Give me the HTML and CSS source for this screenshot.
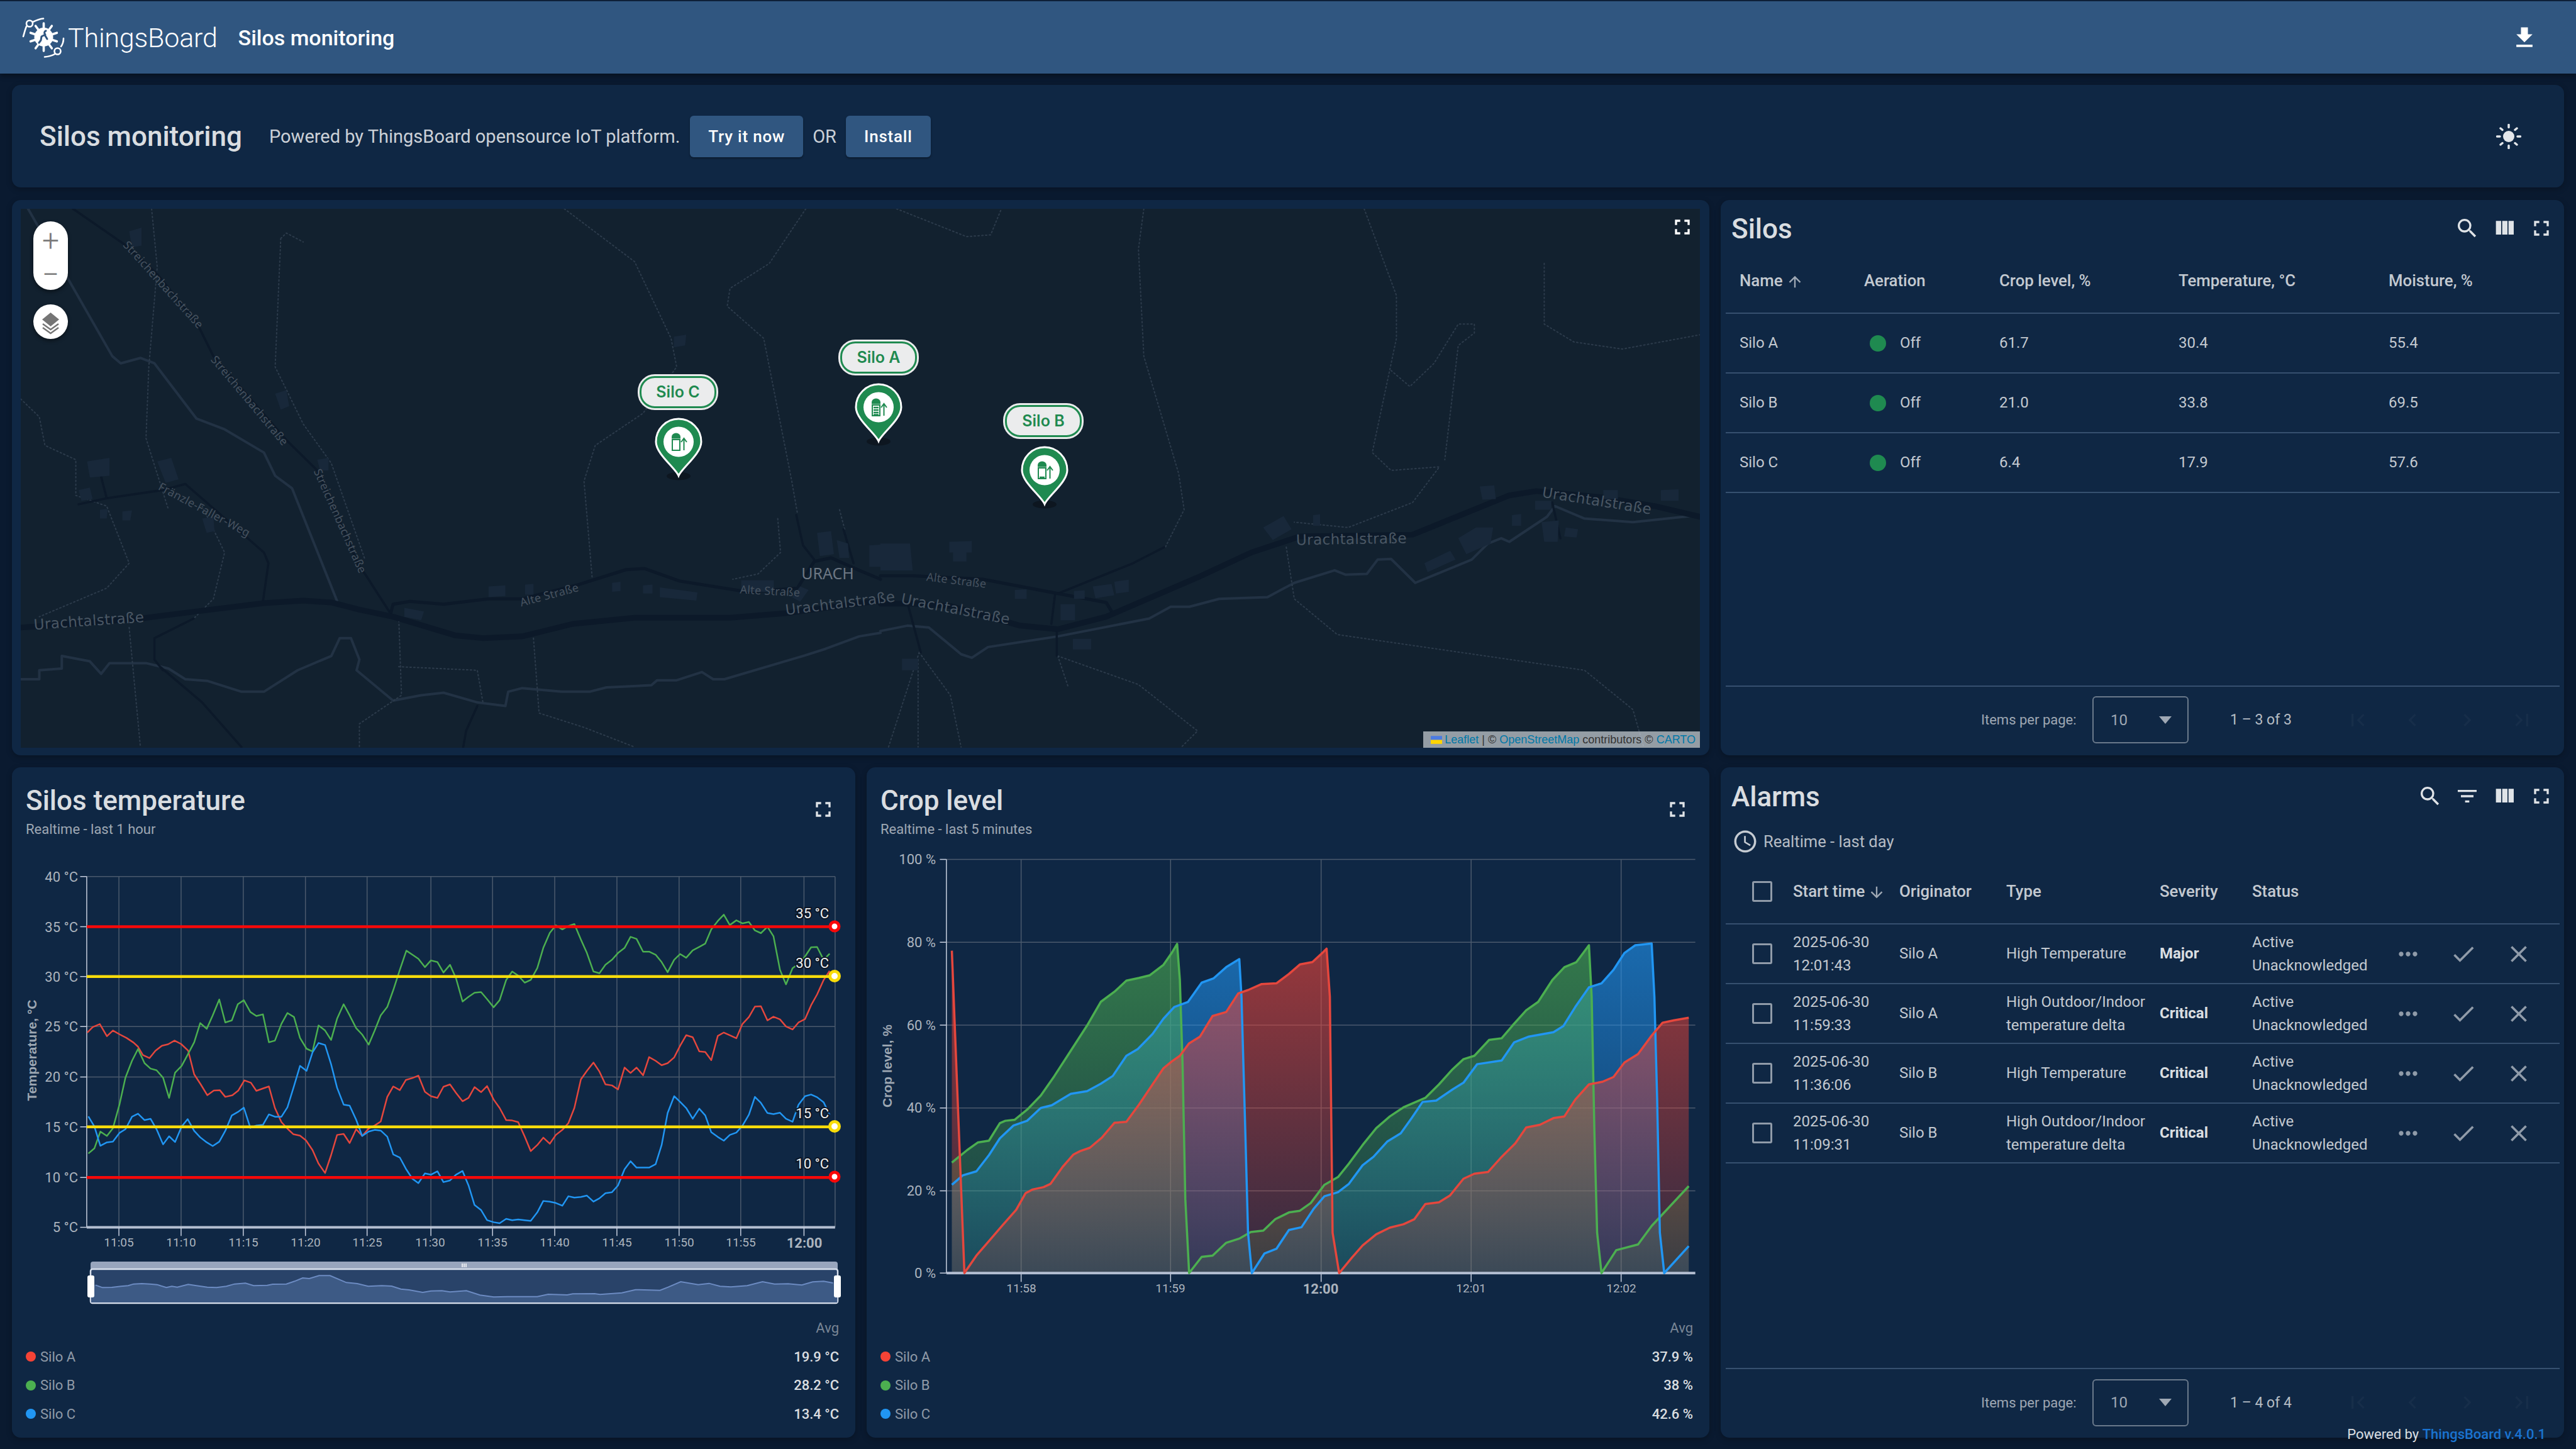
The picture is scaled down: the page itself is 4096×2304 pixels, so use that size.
FILE: index.html
```html
<!DOCTYPE html>
<html lang="en">
<head>
<meta charset="utf-8">
<title>Silos monitoring</title>
<link rel="stylesheet" href="styles.css">
</head>
<body>
<svg class="defs" width="0" height="0" aria-hidden="true">
  <defs>
    <symbol id="i-full" viewBox="0 0 24 24"><path d="M7 14H5v5h5v-2H7v-3zm-2-4h2V7h3V5H5v5zm12 7h-3v2h5v-5h-2v3zM14 5v2h3v3h2V5h-5z"/></symbol>
    <symbol id="i-search" viewBox="0 0 24 24"><path d="M15.5 14h-.79l-.28-.27A6.471 6.471 0 0 0 16 9.5 6.5 6.5 0 1 0 9.5 16c1.61 0 3.09-.59 4.23-1.57l.27.28v.79l5 4.99L20.49 19l-4.99-5zm-6 0C7.01 14 5 11.99 5 9.5S7.01 5 9.5 5 14 7.01 14 9.5 11.99 14 9.5 14z"/></symbol>
    <symbol id="i-cols" viewBox="0 0 24 24"><path d="M10 18h5V5h-5v13zm-6 0h5V5H4v13zM16 5v13h5V5h-5z"/></symbol>
    <symbol id="i-filter" viewBox="0 0 24 24"><path d="M10 18h4v-2h-4v2zM3 6v2h18V6H3zm3 7h12v-2H6v2z"/></symbol>
    <symbol id="i-up" viewBox="0 0 24 24"><path d="M4 12l1.41 1.41L11 7.83V20h2V7.83l5.58 5.59L20 12l-8-8-8 8z"/></symbol>
    <symbol id="i-down" viewBox="0 0 24 24"><path d="M20 12l-1.41-1.41L13 16.17V4h-2v12.17l-5.58-5.59L4 12l8 8 8-8z"/></symbol>
    <symbol id="i-more" viewBox="0 0 24 24"><path d="M6 10c-1.1 0-2 .9-2 2s.9 2 2 2 2-.9 2-2-.9-2-2-2zm12 0c-1.1 0-2 .9-2 2s.9 2 2 2 2-.9 2-2-.9-2-2-2zm-6 0c-1.1 0-2 .9-2 2s.9 2 2 2 2-.9 2-2-.9-2-2-2z"/></symbol>
    <symbol id="i-check" viewBox="0 0 24 24"><path d="M9 16.17L4.83 12l-1.42 1.41L9 19 21 7l-1.41-1.41z"/></symbol>
    <symbol id="i-close" viewBox="0 0 24 24"><path d="M19 6.41L17.59 5 12 10.59 6.41 5 5 6.41 10.59 12 5 17.59 6.41 19 12 13.41 17.59 19 19 17.59 13.41 12z"/></symbol>
    <symbol id="i-clock" viewBox="0 0 24 24"><path d="M11.99 2C6.47 2 2 6.48 2 12s4.47 10 9.99 10C17.52 22 22 17.52 22 12S17.52 2 11.99 2zM12 20c-4.42 0-8-3.58-8-8s3.58-8 8-8 8 3.58 8 8-3.58 8-8 8zm.5-13H11v6l5.25 3.15.75-1.23-4.5-2.67z"/></symbol>
    <symbol id="i-first" viewBox="0 0 24 24"><path d="M18.41 16.59L13.82 12l4.59-4.59L17 6l-6 6 6 6zM6 6h2v12H6z"/></symbol>
    <symbol id="i-prev" viewBox="0 0 24 24"><path d="M15.41 7.41L14 6l-6 6 6 6 1.41-1.41L10.83 12z"/></symbol>
    <symbol id="i-next" viewBox="0 0 24 24"><path d="M10 6L8.59 7.41 13.17 12l-4.58 4.59L10 18l6-6z"/></symbol>
    <symbol id="i-last" viewBox="0 0 24 24"><path d="M5.59 7.41L10.18 12l-4.59 4.59L7 18l6-6-6-6zM16 6h2v12h-2z"/></symbol>
    <symbol id="pin-shape" viewBox="0 0 76 100">
      <ellipse class="pin-shadow" cx="38" cy="93" rx="19" ry="6.5"/>
      <path class="pin-body" d="M38 92.5C33 80 2 58 2 38.500A36 36.500 0 0 1 74 38.500C74 58 43 80 38 92.500Z"/>
      <circle class="pin-hole" cx="38" cy="38.500" r="24"/>
      <path class="pin-solid" d="M27 33.500v-3a7 6 0 0 1 14 0v3z"/>
      <rect class="pin-line" x="28" y="35" width="12" height="17"/>
      <path class="pin-line" d="M46.500 52V34M42 39l4.500-6 4.500 6"/>
    </symbol>
    <linearGradient id="g-red" gradientUnits="userSpaceOnUse" x1="0" y1="292" x2="0" y2="1520"><stop offset="0" stop-color="#f44336" stop-opacity=".72"/><stop offset="1" stop-color="#f44336" stop-opacity=".15"/></linearGradient>
    <linearGradient id="g-green" gradientUnits="userSpaceOnUse" x1="0" y1="292" x2="0" y2="1520"><stop offset="0" stop-color="#4caf50" stop-opacity=".72"/><stop offset="1" stop-color="#4caf50" stop-opacity=".15"/></linearGradient>
    <linearGradient id="g-blue" gradientUnits="userSpaceOnUse" x1="0" y1="292" x2="0" y2="1520"><stop offset="0" stop-color="#2196f3" stop-opacity=".72"/><stop offset="1" stop-color="#2196f3" stop-opacity=".15"/></linearGradient>
  </defs>
</svg>

<header class="topbar">
  <svg class="logo" viewBox="0 0 100 100" aria-hidden="true">
    <g class="logo-lines">
      <path d="M15 47C17 40 18 36 20 31"/><circle cx="25" cy="26.500" r="5"/><path d="M30 24C36 21 41 19 47 18.500"/>
      <circle cx="69.500" cy="70.500" r="5"/><path d="M65 75C60 78 55 79 49 79.500"/><path d="M75 63C78 59 79 55 79 50"/>
    </g>
    <g class="logo-gear">
      <circle cx="47.500" cy="48" r="15"/>
      <path d="M26.600 41.200L68.400 54.800M34.600 30.200L60.400 65.800M47.500 26V70M60.400 30.200L34.600 65.800M68.400 41.200L26.600 54.800"/>
    </g>
    <path class="logo-fig" d="M51 38c-3 1-3 4-1 6l-6 3-1 6-3 4M50 46l3 5"/>
  </svg>
  <span class="brand">ThingsBoard</span>
  <span class="top-title">Silos monitoring</span>
  <svg class="top-icon" viewBox="0 0 24 24" aria-hidden="true"><path d="M19 9h-4V3H9v6H5l7 7 7-7zM5 18v2h14v-2H5z"/></svg>
</header>

<main class="dash">
  <section class="card hero">
    <h1 class="hero-title">Silos monitoring</h1>
    <span class="hero-text">Powered by ThingsBoard opensource IoT platform.</span>
    <button class="btn">Try it now</button>
    <span class="hero-or">OR</span>
    <button class="btn">Install</button>
    <svg class="sun" viewBox="0 0 40 40" aria-hidden="true">
      <circle cx="20" cy="20" r="9"/>
      <path d="M20 1.500v4M20 34.500v4M1.500 20h4.500M34 20h4.500M7 7l3 2.500M33 33l-3-2.500M33 7l-3 2.500M7 33l3-2.500"/>
    </svg>
  </section>

  <section class="card map-card">
    <div class="map">
      <svg class="map-svg" viewBox="33 331 2670 857" aria-hidden="true">
        <g transform="translate(0 310) scale(.8929 .5675)">
          <g class="m-stream">
            <path d="M50 37L120 230L200 450L215 470L250 455L275 470L350 625L400 655L470 720L490 785L520 820L600 1135"/>
            <path d="M37 1355L70 1355L70 1330L110 1325L110 1290L160 1305L180 1340L195 1310L260 1310L300 1325L330 1355L370 1360L430 1390L470 1390L530 1330L590 1290L605 1240L625 1240L640 1300L635 1330L700 1415L750 1400L790 1393L850 1420L900 1430L905 1390L930 1380L1000 1390L1050 1390L1080 1378L1160 1372L1170 1358L1205 1358L1250 1335L1270 1355L1290 1355L1430 1290L1470 1270L1530 1235L1568 1225"/>
          </g>
          <g class="m-dots">
            <path d="M270 37L280 200L265 480L260 680L300 880"/>
            <path d="M500 120L510 105L540 130M500 120L490 480L540 640L590 750L650 1020"/>
            <path d="M1005 37L1130 185L1195 400L1205 480L1145 610L1060 700L1040 800L1055 1080"/>
            <path d="M1435 37L1370 190L1300 260L1295 310L1360 400L1410 800L1420 890"/>
            <path d="M37 570L70 620L80 700L135 740L135 840L190 870L230 1030L190 1100L70 1180"/>
            <path d="M360 870L400 1000L380 1130L345 1185"/>
            <path d="M1385 905L1390 1000L1350 1060L1305 1075"/>
            <path d="M230 1210L250 1545M710 1180L715 1400L640 1480L640 1545M710 1320L850 1330L860 1420M950 1240L960 1450L1040 1490L1130 1545M1495 880L1505 940"/>
          </g>
          <g class="m-thin">
            <path d="M285 1320L360 1420L430 1545M345 1185L275 1240L275 1300L290 1330M850 1430L830 1500L825 1545M1418 895L1430 980L1450 1020M1502 935L1520 1030M178 775L190 848"/>
            <path d="M140 865L190 848L290 825L330 808L430 945L470 1000L478 1030L468 1140"/>
            <path d="M130 37L220 135L280 220L350 355L380 450L510 685L565 770L640 1040L650 1060L695 1170"/>
          </g>
          <g class="m-road2"><path d="M695 1175L700 1145L730 1137L790 1145L870 1130L930 1130L1030 1090L1115 1048L1148 1045L1210 1080L1330 1110L1420 1100L1450 1025L1480 1015L1530 1050L1568 1075"/></g>
          <g class="m-road"><path d="M37 1210L60 1208L250 1185L350 1165L470 1142L540 1135L590 1140L640 1160L700 1180L810 1232L860 1240L930 1235L1020 1200L1130 1183L1300 1183L1400 1170L1568 1135"/></g>
          <g class="m-bld">
            <path d="M155 745L195 735L195 785L160 790ZM280 745L305 735L318 795L295 805ZM140 825L160 818L165 850L145 855ZM178 880L192 878L190 905L178 905ZM218 885L235 882L232 910L218 910ZM360 905L380 900L382 940L368 945ZM490 555L510 545L515 590L500 600ZM230 100L252 90L252 140L235 145ZM565 740L585 735L585 770L570 770ZM870 1095L900 1092L900 1122L870 1125ZM935 1090L950 1088L950 1118L935 1118ZM1090 1085L1105 1082L1105 1108L1090 1110ZM1175 1098L1242 1112L1240 1135L1175 1125ZM1145 1092L1162 1090L1162 1115L1145 1115ZM720 1155L755 1165L750 1190L720 1180ZM1320 1078L1378 1078L1378 1110L1320 1110ZM1425 1095L1440 1105L1425 1138L1410 1125ZM1455 945L1480 940L1485 1005L1460 1010ZM1490 965L1510 975L1512 1015L1495 1015ZM1548 980L1568 978L1568 1040L1548 1040ZM1200 395L1222 390L1220 420L1200 425Z"/>
          </g>
        </g>
        <g transform="translate(1400 310) scale(.8546 .5675)">
          <g class="m-stream">
            <path d="M0 1220L50 1205L90 1210L150 1285L170 1295L200 1265L330 1235L500 1185L540 1152L575 1152L630 1130L720 1125L770 1085L845 1050L865 1062L905 1060L925 1020L950 1018L995 1085L1100 1020L1130 975L1155 960L1170 970L1240 900L1255 870L1310 905L1400 915L1525 895"/>
          </g>
          <g class="m-dots">
            <path d="M30 37L160 115L205 110L225 37M490 37L480 150L490 450L555 780L565 880L530 985"/>
            <path d="M900 37L960 280L960 400L915 720L950 770L1040 760L990 860L870 930L770 915"/>
            <path d="M1235 190L1235 360L1290 410L1380 430L1525 390"/>
            <path d="M950 490L985 535L1030 470L1075 360L1105 360L1105 385L1075 420L1050 740"/>
            <path d="M755 985L770 1130L850 1230L1310 1330L1400 1440L1420 1545"/>
            <path d="M330 1290L480 1370L590 1500L560 1545M330 1290L350 1380M72 1280L130 1400L150 1545M72 1280L15 1545M70 1300L70 1545"/>
          </g>
          <g class="m-thin">
            <path d="M325 1115L318 1200M328 1215L328 1290M50 1140L75 1280M1250 860L1265 960"/>
            <path d="M330 1115L470 1030L528 985"/>
          </g>
          <g class="m-road2"><path d="M0 1065L60 1065L190 1075L330 1115L420 1140L430 1165"/></g>
          <g class="m-road"><path d="M0 1143L60 1143L130 1150L260 1205L330 1215L420 1180L590 1070L690 1000L780 955L990 950L1170 840L1220 828L1340 845L1440 870L1525 900"/></g>
          <g class="m-bld">
            <path d="M128 970L170 968L170 1000L128 1000ZM135 1000L160 1000L160 1025L135 1025ZM0 975L55 975L60 1050L0 1050ZM395 1095L430 1088L435 1120L400 1128ZM435 1082L462 1076L462 1110L438 1115ZM360 1108L380 1106L380 1130L360 1130ZM250 1105L272 1103L272 1130L250 1130ZM335 1145L362 1145L362 1190L335 1190ZM358 1242L392 1242L392 1272L358 1272ZM40 1298L70 1298L70 1330L40 1330ZM712 930L750 898L765 935L730 965ZM805 895L818 893L818 925L805 925ZM1115 815L1142 812L1145 850L1120 852ZM1012 1030L1060 995L1070 1020L1018 1055ZM1075 960L1108 930L1140 930L1135 975L1090 1005ZM1175 895L1192 892L1192 925L1175 925ZM1230 915L1262 910L1260 970L1235 970ZM1275 930L1298 935L1295 958L1272 955ZM1218 855L1248 855L1248 880L1218 880ZM1452 825L1485 823L1485 855L1452 855ZM1345 825L1372 825L1372 850L1345 850Z"/>
          </g>
        </g>
        <g class="m-label">
          <text transform="translate(142 994) rotate(-4)">Urachtalstraße</text>
          <text transform="translate(1337 966) rotate(-7)">Urachtalstraße</text>
          <text transform="translate(1518 975) rotate(11)">Urachtalstraße</text>
          <text transform="translate(2149 864) rotate(-1)">Urachtalstraße</text>
          <text transform="translate(2538 803) rotate(9)">Urachtalstraße</text>
        </g>
        <g class="m-label m-small">
          <text transform="translate(875 951) rotate(-15)">Alte Straße</text>
          <text transform="translate(1224 945) rotate(3)">Alte Straße</text>
          <text transform="translate(1520 928) rotate(7)">Alte Straße</text>
          <text transform="translate(255 456) rotate(48)">Streichenbachstraße</text>
          <text transform="translate(392 640) rotate(50)">Streichenbachstraße</text>
          <text transform="translate(535 830) rotate(66)">Streichenbachstraße</text>
          <text transform="translate(322 815) rotate(28)">Fränzle-Faller-Weg</text>
        </g>
        <text class="m-town" x="1316" y="920">URACH</text>
      </svg>
      <div class="zoomctl"><span class="zoom-sign">+</span><span class="zoom-sign">−</span></div>
      <div class="layerctl">
        <svg viewBox="0 0 55 55" aria-hidden="true"><path class="layer-top" d="M27.500 13L41 24L27.500 35L14 24Z"/><path class="layer-low" d="M15 31L27.500 40L40 31M15 37L27.500 46L40 37"/></svg>
      </div>
      <svg class="map-full" aria-hidden="true"><use href="#i-full"/></svg>

      <div class="mlabel ml-a">Silo A</div>
      <div class="mlabel ml-c">Silo C</div>
      <div class="mlabel ml-b">Silo B</div>
      <svg class="pin pin-a" viewBox="0 0 76 100" aria-hidden="true"><use href="#pin-shape"/><path class="pin-bars" d="M30 39h8M30 43h8M30 47h8M30 50.500h8"/></svg>
      <svg class="pin pin-c" viewBox="0 0 76 100" aria-hidden="true"><use href="#pin-shape"/></svg>
      <svg class="pin pin-b" viewBox="0 0 76 100" aria-hidden="true"><use href="#pin-shape"/><path class="pin-bars" d="M30 50h8"/></svg>

      <div class="attrib"><svg class="flag" viewBox="0 0 20 14" aria-hidden="true"><rect width="20" height="7" fill="#4C7BE1"/><rect y="7" width="20" height="7" fill="#FFD500"/></svg><a>Leaflet</a> | © <a>OpenStreetMap</a> contributors © <a>CARTO</a></div>
    </div>
  </section>

  <section class="card table-card">
    <div class="tb-head silos-head">
      <h2 class="tb-title">Silos</h2>
      <div class="tb-tools">
        <svg class="ic"><use href="#i-search"/></svg>
        <svg class="ic"><use href="#i-cols"/></svg>
        <svg class="ic"><use href="#i-full"/></svg>
      </div>
    </div>
    <div class="tb-body">
      <table class="tbl silos">
        <thead><tr>
          <th class="s1">Name<svg class="sort"><use href="#i-up"/></svg></th>
          <th class="s2">Aeration</th><th class="s3">Crop level, %</th><th class="s4">Temperature, °C</th><th class="s5">Moisture, %</th>
        </tr></thead>
        <tbody>
          <tr><td>Silo A</td><td><span class="state"><i class="dot"></i>Off</span></td><td>61.7</td><td>30.4</td><td>55.4</td></tr>
          <tr><td>Silo B</td><td><span class="state"><i class="dot"></i>Off</span></td><td>21.0</td><td>33.8</td><td>69.5</td></tr>
          <tr><td>Silo C</td><td><span class="state"><i class="dot"></i>Off</span></td><td>6.4</td><td>17.9</td><td>57.6</td></tr>
        </tbody>
      </table>
    </div>
    <div class="pager">
      <span class="pg-label">Items per page:</span>
      <div class="pg-select"><span>10</span><i class="pg-caret"></i></div>
      <span class="pg-range">1 – 3 of 3</span>
      <div class="pg-nav"><svg class="ic"><use href="#i-first"/></svg><svg class="ic"><use href="#i-prev"/></svg><svg class="ic"><use href="#i-next"/></svg><svg class="ic"><use href="#i-last"/></svg></div>
    </div>
  </section>

  <section class="card chart-card">
    <div class="ch-head">
      <div><h2 class="ch-title">Silos temperature</h2><p class="ch-sub">Realtime - last 1 hour</p></div>
      <svg class="ic ch-full"><use href="#i-full"/></svg>
    </div>
    <svg class="ch-svg" viewBox="0 1340 1341 749" aria-hidden="true">
      <g transform="translate(-19 0)">
        <g transform="translate(0 1210) scale(.8673 .5357)">
          <path class="grid" d="M159 343H1531M159 788H1531M159 938H1531"/>
          <path class="grid" d="M218 343V1384M332 343V1384M446 343V1384M560 343V1384M673 343V1384M790 343V1384M903 343V1384M1017 343V1384M1131 343V1384M1245 343V1384M1358 343V1384M1474 343V1384M1531 343V1384"/>
          <path class="axis-y" d="M159 343V1384M147 343H159M147 492H159M147 640H159M147 788H159M147 938H159M147 1086H159M147 1236H159M147 1384H159"/>
          <path class="axis-x" d="M159 1384H1531"/>
          <path class="axis-y" d="M218 1384V1410M332 1384V1410M446 1384V1410M560 1384V1410M673 1384V1410M790 1384V1410M903 1384V1410M1017 1384V1410M1131 1384V1410M1245 1384V1410M1358 1384V1410M1474 1384V1410"/>
          <polyline class="ln ln-red" points="160,806 170,790 183,781 196,817 207,800 220,812 232,822 245,836 253,848 262,873 274,882 285,860 297,845 308,841 320,830 332,840 345,860 356,930 368,960 380,992 392,978 403,977 413,997 426,992 437,978 448,948 460,955 470,979 482,972 493,966 504,1030 516,1072 528,1093 538,1108 550,1112 561,1126 573,1155 584,1195 596,1223 607,1170 618,1110 630,1107 641,1134 653,1093 664,1113 676,1091 687,1082 698,1070 710,997 721,966 733,977 744,947 756,941 767,934 779,982 790,995 802,1000 813,967 825,960 836,985 848,1010 859,1000 870,968 882,983 893,965 905,1005 916,1030 928,1066 939,1067 950,1072 962,1115 973,1158 985,1140 996,1118 1008,1136 1019,1110 1031,1095 1042,1075 1053,1030 1065,945 1076,920 1088,895 1099,922 1110,960 1122,963 1133,975 1145,910 1156,926 1167,910 1179,933 1190,879 1202,890 1213,903 1224,897 1236,880 1247,845 1258,814 1270,820 1282,862 1293,864 1304,888 1316,816 1327,806 1338,814 1350,823 1361,781 1373,760 1384,729 1395,728 1407,770 1418,759 1430,767 1441,788 1453,797 1464,776 1476,766 1487,725 1498,693 1510,650 1521,623"/>
          <polyline class="ln ln-green" points="162,1165 173,1150 184,1100 196,1113 207,1090 219,1020 230,940 242,890 253,855 265,897 276,913 287,918 299,940 310,1000 321,925 333,905 344,872 356,835 367,778 379,795 390,755 402,708 413,776 425,770 436,722 447,710 459,745 470,757 482,752 493,835 504,830 516,780 527,748 539,760 550,822 562,854 573,862 584,785 596,800 607,828 618,765 630,722 641,755 653,793 664,812 676,842 687,800 698,755 710,730 721,680 733,620 745,563 756,575 767,587 779,612 790,592 802,597 813,628 825,605 836,645 848,714 859,700 870,688 882,686 893,707 905,731 916,710 928,650 939,625 950,637 962,658 973,650 985,615 996,555 1008,510 1019,488 1031,500 1042,490 1053,484 1065,530 1076,570 1088,625 1099,630 1110,605 1122,590 1133,570 1145,555 1156,522 1167,528 1179,566 1190,566 1202,575 1213,597 1224,627 1236,590 1247,573 1258,584 1270,562 1282,552 1293,542 1304,500 1316,475 1327,456 1338,487 1350,473 1361,482 1373,478 1384,503 1395,511 1407,492 1418,520 1430,620 1441,663 1453,615 1464,602 1476,580 1487,553 1498,552 1510,590 1521,572"/>
          <polyline class="ln ln-blue" points="162,1055 173,1085 184,1142 196,1132 207,1130 219,1104 230,1093 242,1056 253,1047 265,1066 276,1062 287,1093 299,1138 310,1114 321,1131 333,1085 344,1063 356,1098 367,1117 379,1132 390,1143 402,1130 413,1098 425,1052 436,1042 447,1029 459,1089 470,1082 482,1080 493,1049 504,1056 516,1056 527,1028 539,965 550,905 562,920 573,865 584,837 596,843 607,900 618,970 630,1020 641,1023 653,1065 664,1113 676,1100 687,1095 698,1097 710,1115 721,1168 733,1177 744,1210 756,1240 767,1253 779,1224 790,1228 802,1218 813,1250 825,1245 836,1228 848,1217 859,1260 870,1318 882,1333 893,1363 905,1369 916,1372 928,1359 939,1363 950,1361 962,1363 973,1365 985,1340 996,1306 1008,1308 1019,1312 1031,1320 1042,1292 1053,1296 1065,1294 1076,1290 1088,1308 1099,1298 1110,1283 1122,1280 1133,1260 1145,1212 1156,1188 1167,1207 1179,1207 1190,1207 1202,1197 1213,1140 1224,1045 1236,995 1247,1012 1258,1030 1270,1062 1282,1032 1293,1052 1304,1102 1316,1116 1327,1127 1338,1110 1350,1103 1361,1083 1373,1050 1384,997 1395,1015 1407,1045 1418,1048 1430,1044 1441,1062 1453,1071 1464,1020 1476,995 1487,990 1498,998 1510,1013 1521,1050"/>
          <path class="th th-red" d="M159 492H1531M159 1236H1531"/>
          <path class="th th-yel" d="M159 640H1531M159 1086H1531"/>
        </g>
        <circle class="thd thd-red" cx="1327" cy="1473" r="7"/>
        <circle class="thd thd-yel" cx="1327" cy="1552" r="7.500"/>
        <circle class="thd thd-yel" cx="1327" cy="1791" r="7.500"/>
        <circle class="thd thd-red" cx="1327" cy="1871" r="7"/>
        <g class="th-lab">
          <text x="1318" y="1460">35 °C</text><text x="1318" y="1539">30 °C</text><text x="1318" y="1778">15 °C</text><text x="1318" y="1858">10 °C</text>
        </g>
        <g class="yl">
          <text x="124" y="1402">40 °C</text><text x="124" y="1482">35 °C</text><text x="124" y="1561">30 °C</text><text x="124" y="1640">25 °C</text><text x="124" y="1720">20 °C</text><text x="124" y="1800">15 °C</text><text x="124" y="1880">10 °C</text><text x="124" y="1959">5 °C</text>
        </g>
        <g class="xl">
          <text x="189" y="1982">11:05</text><text x="288" y="1982">11:10</text><text x="387" y="1982">11:15</text><text x="486" y="1982">11:20</text><text x="584" y="1982">11:25</text><text x="684" y="1982">11:30</text><text x="783" y="1982">11:35</text><text x="882" y="1982">11:40</text><text x="981" y="1982">11:45</text><text x="1080" y="1982">11:50</text><text x="1178" y="1982">11:55</text><text class="xl-b" x="1279" y="1984">12:00</text>
        </g>
        <text class="ax-t" transform="translate(58 1670) rotate(-90)">Temperature, °C</text>
        <g>
          <path class="br-top" d="M144 2010a4 4 0 0 1 4-4H1328a4 4 0 0 1 4 4V2018H144Z"/>
          <path class="br-grip" d="M735 2009v6M738 2009v6M741 2009v6"/>
          <rect class="br-body" x="144" y="2018" width="1188" height="54" rx="3"/>
          <g transform="translate(0 1900) scale(.8673 .3333)">
            <polygon class="br-area" points="175,430 188,442 205,441 222,436 235,433 245,425 260,423 275,425 288,428 305,442 315,436 325,440 345,427 360,433 380,440 397,442 415,436 430,425 450,421 465,433 490,431 500,426 525,425 540,412 555,396 567,399 585,385 605,385 635,418 655,423 675,436 700,433 718,435 735,449 750,453 775,465 790,458 810,457 825,463 855,457 880,478 905,487 930,485 985,485 1005,474 1040,477 1050,472 1090,471 1100,475 1140,467 1165,452 1210,455 1225,440 1248,414 1280,428 1300,422 1320,436 1340,439 1370,433 1398,414 1420,425 1445,424 1470,430 1490,415 1510,412 1535,420 1535,513 167,513 167,425"/>
            <polyline class="br-line" points="175,430 188,442 205,441 222,436 235,433 245,425 260,423 275,425 288,428 305,442 315,436 325,440 345,427 360,433 380,440 397,442 415,436 430,425 450,421 465,433 490,431 500,426 525,425 540,412 555,396 567,399 585,385 605,385 635,418 655,423 675,436 700,433 718,435 735,449 750,453 775,465 790,458 810,457 825,463 855,457 880,478 905,487 930,485 985,485 1005,474 1040,477 1050,472 1090,471 1100,475 1140,467 1165,452 1210,455 1225,440 1248,414 1280,428 1300,422 1320,436 1340,439 1370,433 1398,414 1420,425 1445,424 1470,430 1490,415 1510,412 1527,420"/>
          </g>
          <rect class="br-handle" x="139" y="2028" width="11" height="35" rx="3"/>
          <rect class="br-handle" x="1326" y="2028" width="11" height="35" rx="3"/>
        </g>
      </g>
    </svg>
    <div class="legend">
      <div class="lg-row lg-avg"><span>Avg</span></div>
      <div class="lg-row"><span class="lg-name"><i class="lg-dot red"></i>Silo A</span><b>19.9 °C</b></div>
      <div class="lg-row"><span class="lg-name"><i class="lg-dot green"></i>Silo B</span><b>28.2 °C</b></div>
      <div class="lg-row"><span class="lg-name"><i class="lg-dot blue"></i>Silo C</span><b>13.4 °C</b></div>
    </div>
  </section>

  <section class="card chart-card">
    <div class="ch-head">
      <div><h2 class="ch-title">Crop level</h2><p class="ch-sub">Realtime - last 5 minutes</p></div>
      <svg class="ic ch-full"><use href="#i-full"/></svg>
    </div>
    <svg class="ch-svg" viewBox="1378 1340 1341 749" aria-hidden="true">
      <g transform="translate(1360 1210) scale(.8673 .5357)">
        <path class="grid" d="M167 292H1540M167 538H1540M167 784H1540M167 1030H1540M167 1276H1540M304 292V1520M578 292V1520M854 292V1520M1129 292V1520M1404 292V1520"/>
        <polygon fill="url(#g-blue)" points="177,1520 177,1258 197,1230 222,1218 245,1170 265,1120 290,1082 315,1068 340,1030 360,1022 395,988 425,980 450,958 472,935 497,875 518,855 545,810 565,765 585,730 610,715 635,658 657,645 680,612 704,588 708,700 715,1100 720,1400 727,1520 750,1462 772,1448 795,1392 818,1384 840,1330 860,1292 885,1280 905,1255 930,1200 950,1175 975,1130 1000,1105 1020,1060 1040,1012 1065,1008 1095,975 1115,955 1140,900 1185,889 1208,835 1235,818 1280,805 1298,787 1320,730 1345,672 1368,660 1390,620 1410,570 1430,547 1460,542 1465,700 1470,1000 1475,1400 1483,1520 1528,1440 1528,1520"/>
        <polygon fill="url(#g-green)" points="177,1520 177,1192 205,1155 225,1132 245,1127 265,1075 275,1068 292,1065 315,1035 340,993 365,935 395,860 425,785 450,715 475,685 497,652 520,644 540,636 565,605 580,570 590,543 595,650 600,900 605,1300 612,1520 635,1472 655,1468 680,1430 705,1417 725,1398 748,1394 770,1360 795,1340 815,1335 835,1312 860,1258 885,1235 905,1195 930,1140 955,1090 980,1055 1005,1028 1045,1000 1070,960 1095,915 1115,885 1135,875 1162,828 1185,823 1205,785 1230,740 1252,715 1278,650 1300,612 1322,597 1345,547 1350,700 1355,1100 1360,1400 1368,1520 1395,1452 1435,1435 1460,1380 1528,1262 1528,1520"/>
        <polygon fill="url(#g-red)" points="177,1520 177,563 200,1520 222,1468 245,1425 270,1378 295,1332 312,1283 325,1272 345,1265 358,1255 380,1205 400,1168 412,1158 430,1148 452,1118 475,1074 497,1071 520,1020 545,960 565,912 580,892 595,875 612,838 632,818 655,757 680,745 702,690 720,680 745,662 772,660 795,632 815,604 838,597 858,567 864,557 870,700 875,1400 887,1520 910,1475 930,1438 955,1405 980,1385 1005,1375 1025,1360 1045,1315 1070,1310 1090,1290 1115,1240 1135,1225 1160,1220 1185,1175 1210,1135 1230,1088 1255,1080 1280,1060 1300,1055 1320,1005 1345,960 1370,952 1390,938 1410,895 1435,870 1460,815 1480,777 1500,770 1528,762 1528,1520"/>
        <path class="axis-y" d="M167 292V1520M155 292H167M155 538H167M155 784H167M155 1030H167M155 1276H167M155 1520H167M304 1520V1546M578 1520V1546M854 1520V1546M1129 1520V1546M1404 1520V1546"/>
        <path class="axis-x" d="M167 1520H1540"/>
        <polyline class="ln2 ln-green" points="177,1192 205,1155 225,1132 245,1127 265,1075 275,1068 292,1065 315,1035 340,993 365,935 395,860 425,785 450,715 475,685 497,652 520,644 540,636 565,605 580,570 590,543 595,650 600,900 605,1300 612,1520 635,1472 655,1468 680,1430 705,1417 725,1398 748,1394 770,1360 795,1340 815,1335 835,1312 860,1258 885,1235 905,1195 930,1140 955,1090 980,1055 1005,1028 1045,1000 1070,960 1095,915 1115,885 1135,875 1162,828 1185,823 1205,785 1230,740 1252,715 1278,650 1300,612 1322,597 1345,547 1350,700 1355,1100 1360,1400 1368,1520 1395,1452 1435,1435 1460,1380 1528,1262"/>
        <polyline class="ln2 ln-blue" points="177,1258 197,1230 222,1218 245,1170 265,1120 290,1082 315,1068 340,1030 360,1022 395,988 425,980 450,958 472,935 497,875 518,855 545,810 565,765 585,730 610,715 635,658 657,645 680,612 704,588 708,700 715,1100 720,1400 727,1520 750,1462 772,1448 795,1392 818,1384 840,1330 860,1292 885,1280 905,1255 930,1200 950,1175 975,1130 1000,1105 1020,1060 1040,1012 1065,1008 1095,975 1115,955 1140,900 1185,889 1208,835 1235,818 1280,805 1298,787 1320,730 1345,672 1368,660 1390,620 1410,570 1430,547 1460,542 1465,700 1470,1000 1475,1400 1483,1520 1528,1440"/>
        <polyline class="ln2 ln-red" points="177,563 200,1520 222,1468 245,1425 270,1378 295,1332 312,1283 325,1272 345,1265 358,1255 380,1205 400,1168 412,1158 430,1148 452,1118 475,1074 497,1071 520,1020 545,960 565,912 580,892 595,875 612,838 632,818 655,757 680,745 702,690 720,680 745,662 772,660 795,632 815,604 838,597 858,567 864,557 870,700 875,1400 887,1520 910,1475 930,1438 955,1405 980,1385 1005,1375 1025,1360 1045,1315 1070,1310 1090,1290 1115,1240 1135,1225 1160,1220 1185,1175 1210,1135 1230,1088 1255,1080 1280,1060 1300,1055 1320,1005 1345,960 1370,952 1390,938 1410,895 1435,870 1460,815 1480,777 1500,770 1528,762"/>
      </g>
      <g class="yl">
        <text x="1488" y="1374">100 %</text><text x="1488" y="1506">80 %</text><text x="1488" y="1638">60 %</text><text x="1488" y="1769">40 %</text><text x="1488" y="1901">20 %</text><text x="1488" y="2032">0 %</text>
      </g>
      <g class="xl">
        <text x="1624" y="2055">11:58</text><text x="1861" y="2055">11:59</text><text class="xl-b" x="2100" y="2057">12:00</text><text x="2339" y="2055">12:01</text><text x="2578" y="2055">12:02</text>
      </g>
      <text class="ax-t" transform="translate(1418 1695) rotate(-90)">Crop level, %</text>
    </svg>
    <div class="legend">
      <div class="lg-row lg-avg"><span>Avg</span></div>
      <div class="lg-row"><span class="lg-name"><i class="lg-dot red"></i>Silo A</span><b>37.9 %</b></div>
      <div class="lg-row"><span class="lg-name"><i class="lg-dot green"></i>Silo B</span><b>38 %</b></div>
      <div class="lg-row"><span class="lg-name"><i class="lg-dot blue"></i>Silo C</span><b>42.6 %</b></div>
    </div>
  </section>

  <section class="card table-card alarms-card">
    <div class="tb-head alarms-head">
      <h2 class="tb-title">Alarms</h2>
      <div class="tb-tools">
        <svg class="ic"><use href="#i-search"/></svg>
        <svg class="ic"><use href="#i-filter"/></svg>
        <svg class="ic"><use href="#i-cols"/></svg>
        <svg class="ic"><use href="#i-full"/></svg>
      </div>
    </div>
    <div class="rt-row"><svg class="rt-ic"><use href="#i-clock"/></svg><span>Realtime - last day</span></div>
    <div class="tb-body">
      <table class="tbl alarms">
        <thead><tr>
          <th class="a1"><i class="cb"></i></th>
          <th class="a2">Start time<svg class="sort"><use href="#i-down"/></svg></th>
          <th class="a3">Originator</th><th class="a4">Type</th><th class="a5">Severity</th><th class="a6">Status</th><th class="a7"></th>
        </tr></thead>
        <tbody>
          <tr><td><i class="cb"></i></td><td>2025-06-30 12:01:43</td><td>Silo A</td><td>High Temperature</td><td class="sev">Major</td><td>Active<br>Unacknowledged</td><td><div class="acts"><svg><use href="#i-more"/></svg><svg><use href="#i-check"/></svg><svg><use href="#i-close"/></svg></div></td></tr>
          <tr><td><i class="cb"></i></td><td>2025-06-30 11:59:33</td><td>Silo A</td><td>High Outdoor/Indoor temperature delta</td><td class="sev">Critical</td><td>Active<br>Unacknowledged</td><td><div class="acts"><svg><use href="#i-more"/></svg><svg><use href="#i-check"/></svg><svg><use href="#i-close"/></svg></div></td></tr>
          <tr><td><i class="cb"></i></td><td>2025-06-30 11:36:06</td><td>Silo B</td><td>High Temperature</td><td class="sev">Critical</td><td>Active<br>Unacknowledged</td><td><div class="acts"><svg><use href="#i-more"/></svg><svg><use href="#i-check"/></svg><svg><use href="#i-close"/></svg></div></td></tr>
          <tr><td><i class="cb"></i></td><td>2025-06-30 11:09:31</td><td>Silo B</td><td>High Outdoor/Indoor temperature delta</td><td class="sev">Critical</td><td>Active<br>Unacknowledged</td><td><div class="acts"><svg><use href="#i-more"/></svg><svg><use href="#i-check"/></svg><svg><use href="#i-close"/></svg></div></td></tr>
        </tbody>
      </table>
    </div>
    <div class="pager">
      <span class="pg-label">Items per page:</span>
      <div class="pg-select"><span>10</span><i class="pg-caret"></i></div>
      <span class="pg-range">1 – 4 of 4</span>
      <div class="pg-nav"><svg class="ic"><use href="#i-first"/></svg><svg class="ic"><use href="#i-prev"/></svg><svg class="ic"><use href="#i-next"/></svg><svg class="ic"><use href="#i-last"/></svg></div>
    </div>
    <div class="powered">Powered by <a>ThingsBoard v.4.0.1</a></div>
  </section>
</main>
</body>
</html>
```

FILE: styles.css
```css
* { box-sizing: border-box; }
html, body { margin: 0; padding: 0; }
body {
  width: 4096px; height: 2304px; overflow: hidden;
  background: #0a1a30;
  font-family: Roboto, "Noto Sans", sans-serif;
  color: rgba(255,255,255,.87);
}
.defs { position: absolute; }
h1, h2, p { margin: 0; }

.topbar {
  height: 117px; display: flex; align-items: center;
  background: #305680; border-top: 2px solid #0d1f38;
  padding: 0 60px 0 22px;
  box-shadow: 0 3px 8px rgba(0,0,0,.4);
  position: relative;
}
.logo { width: 100px; height: 100px; margin-right: -14px; flex: none; margin-top: 2px; }
.logo-lines { fill: none; stroke: #fff; stroke-width: 2.600; stroke-linecap: round; }
.logo-gear circle { fill: #fff; }
.logo-gear path { stroke: #fff; stroke-width: 3.600; stroke-linecap: round; fill: none; }
.logo-fig { fill: none; stroke: #305680; stroke-width: 3; stroke-linecap: round; stroke-linejoin: round; }
.brand { font-size: 43px; font-weight: 300; color: #fff; letter-spacing: -.2px; }
.top-title { font-size: 34px; font-weight: 500; color: #fff; margin-left: 33px; }
.top-icon { width: 44px; height: 44px; fill: #fff; margin-left: auto; }

.dash {
  display: grid;
  grid-template-columns: 1341px 1340px 1341px;
  grid-template-rows: 163px 883px 1066px;
  column-gap: 18px; row-gap: 19.500px;
  padding: 18px 19px 0;
}
.card {
  background: #0f2744; border-radius: 14px;
  box-shadow: 0 3px 10px rgba(0,0,0,.25);
  position: relative;
}

.hero { grid-column: 1 / 4; display: flex; align-items: center; padding: 0 30px 0 44px; }
.hero-title { font-size: 44px; font-weight: 500; line-height: 56px; margin-right: 43px; color: rgba(255,255,255,.87); }
.hero-text { font-size: 29px; color: rgba(255,255,255,.8); margin-right: 16px; }
.btn {
  height: 66px; border: 0; border-radius: 6px; background: #305680; color: #fff;
  font: 500 26px Roboto, sans-serif; padding: 0 29px; letter-spacing: .8px;
  box-shadow: 0 2px 3px rgba(0,0,0,.35);
}
.hero-or { font-size: 29px; color: rgba(255,255,255,.8); margin: 0 15px; }
.sun { width: 40px; height: 40px; margin-left: auto; margin-right: 38px; fill: #e3e6ea; stroke: #e3e6ea; stroke-width: 3.500; stroke-linecap: round; }
.sun circle { stroke: none; }

.map-card { grid-column: 1 / 3; padding: 14px; }
.map { position: relative; width: 2670px; height: 857px; background: #12212f; overflow: hidden; }
.map-svg { position: absolute; inset: 0; width: 100%; height: 100%; }
.map-svg path { fill: none; vector-effect: non-scaling-stroke; stroke-linejoin: round; stroke-linecap: round; }
.m-road path { stroke: #0c1929; stroke-width: 9px; }
.m-road2 path { stroke: #0c1929; stroke-width: 5px; }
.m-thin path { stroke: #0c1929; stroke-width: 3.500px; }
.m-stream path { stroke: #223244; stroke-width: 4px; }
.m-dots path { stroke: #2c3b4b; stroke-width: 2px; stroke-dasharray: 2 4; }
.map-svg .m-bld path { fill: #18283a; stroke: none; }
.m-label text { font: 23px "DejaVu Sans", sans-serif; fill: #4a5764; text-anchor: middle; letter-spacing: .4px; }
.m-small text { font: 18px "Noto Sans", sans-serif; fill: #46525f; letter-spacing: .3px; }
.m-town { font: 25px "Noto Sans", sans-serif; fill: #6d7783; text-anchor: middle; }

.zoomctl {
  position: absolute; left: 20px; top: 20px; width: 55px; height: 109px;
  background: #fff; border-radius: 28px; box-shadow: 0 3px 6px rgba(0,0,0,.45);
  display: flex; flex-direction: column; align-items: center;
}
.zoom-sign { height: 54px; line-height: 60px; font: 300 48px/62px Roboto, sans-serif; color: #7a7a7a; }
.layerctl {
  position: absolute; left: 20px; top: 152px; width: 55px; height: 55px;
  background: #fff; border-radius: 50%; box-shadow: 0 3px 6px rgba(0,0,0,.45);
}
.layerctl svg { display: block; width: 55px; height: 55px; }
.layer-top { fill: #757575; }
.layer-low { fill: none; stroke: #757575; stroke-width: 2.500; }
.map-full { position: absolute; right: 8px; top: 9px; width: 40px; height: 40px; fill: #fff; }

.mlabel {
  position: absolute; width: 122px; height: 51px;
  background: #ebeced; border: 3px solid #1f8a50; border-radius: 24px;
  box-shadow: 0 0 0 3px #ebeced;
  font: 600 25px/45px Inter, sans-serif; color: #1f8a50; text-align: center;
}
.ml-a { left: 1303px; top: 211px; }
.ml-c { left: 984px; top: 266px; }
.ml-b { left: 1565px; top: 312px; }
.pin { position: absolute; width: 76px; height: 100px; }
.pin-a { left: 1326px; top: 277px; }
.pin-c { left: 1008px; top: 332px; }
.pin-b { left: 1590px; top: 377px; }
.pin-shadow { fill: #0d1620; }
.pin-body { fill: #1f8a50; stroke: #fff; stroke-width: 3; }
.pin-hole { fill: #fff; }
.pin-solid { fill: #1f8a50; }
.pin-line { fill: none; stroke: #1f8a50; stroke-width: 2; }
.pin-bars { fill: none; stroke: #1f8a50; stroke-width: 2.500; }

.attrib {
  position: absolute; right: 0; bottom: 0; height: 26px; padding: 0 7px 0 12px;
  background: rgba(235,240,245,.6); color: #333;
  font: 18px/26px "Liberation Sans", sans-serif; white-space: nowrap;
}
.attrib a { color: #0078a8; }
.flag { display: inline-block; width: 18px; height: 13px; margin-right: 4px; vertical-align: -1px; }

.table-card { display: flex; flex-direction: column; }
.tb-head { display: flex; justify-content: space-between; flex: none; padding-left: 17px; padding-right: 16px; }
.silos-head { height: 79px; padding-top: 22px; }
.alarms-head { height: 89px; padding-top: 23px; }
.tb-title { font-size: 44px; font-weight: 500; line-height: 48px; }
.tb-tools { display: flex; gap: 19px; margin-top: 3px; }
.ic { width: 40px; height: 40px; fill: rgba(255,255,255,.87); display: block; flex: none; }
.rt-row { height: 58px; flex: none; display: flex; align-items: center; padding-left: 17px; font-size: 25.500px; color: rgba(255,255,255,.7); }
.rt-ic { width: 42px; height: 42px; fill: rgba(255,255,255,.76); margin-right: 8px; margin-left: 1px; flex: none; }
.tb-body { flex: 1; padding: 0 7px 0 8px; min-height: 0; }
.tbl { width: 1326px; table-layout: fixed; border-collapse: collapse; font-size: 24px; color: rgba(255,255,255,.76); line-height: 37px; }
.tbl th { text-align: left; font-size: 25.800px; font-weight: 500; color: rgba(255,255,255,.76); padding: 0; white-space: nowrap; }
.tbl td { padding: 0; }
.tbl tr { border-bottom: 2.500px solid #36506f; }
.silos thead tr { height: 101px; }
.silos tbody tr { height: 95px; }
.silos td:first-child, .silos th:first-child { padding-left: 22px; }
.s1 { width: 220px; } .s2 { width: 215px; } .s3 { width: 285px; } .s4 { width: 334px; } .s5 { width: auto; }
.sort { width: 28px; height: 28px; fill: rgba(255,255,255,.6); vertical-align: -7px; margin-left: 5px; }
.state { display: inline-flex; align-items: center; vertical-align: middle; }
.dot { width: 26px; height: 26px; border-radius: 50%; background: #1f8a50; margin: 0 22px 0 9px; }
.alarms thead tr { height: 102px; }
.alarms tbody tr { height: 95px; }
.a1 { width: 107px; } .a2 { width: 169px; } .a3 { width: 170px; } .a4 { width: 244px; } .a5 { width: 147px; } .a6 { width: 204px; } .a7 { width: auto; }
.cb { display: block; width: 32px; height: 33px; border: 3.500px solid rgba(255,255,255,.54); border-radius: 3px; margin-left: 42px; }
.sev { font-weight: 700; color: rgba(255,255,255,.87); }
.acts { display: flex; }
.acts svg { width: 88px; height: 44px; fill: rgba(255,255,255,.54); }

.pager { height: 111px; flex: none; margin: 0 7px 0 8px; padding-bottom: 3px; border-top: 2.500px solid #36506f; display: flex; align-items: center; font-size: 22px; color: rgba(255,255,255,.6); padding-left: 406px; }
.pg-label { width: 177px; flex: none; }
.pg-select { width: 153px; height: 75px; flex: none; border: 2px solid rgba(255,255,255,.38); border-radius: 6px; display: flex; align-items: center; justify-content: space-between; padding: 0 25px 0 27px; font-size: 24px; margin-right: 66px; }
.pg-caret { width: 0; height: 0; border: 10px solid transparent; border-top: 12px solid rgba(255,255,255,.6); border-bottom: 0; }
.pg-range { width: 150px; flex: none; font-size: 23px; color: rgba(255,255,255,.7); }
.pg-nav { display: flex; gap: 47px; margin-left: 33px; }
.pg-nav .ic { fill: rgba(255,255,255,.035); }
.powered { position: absolute; right: 29px; bottom: -7px; font-size: 22px; color: rgba(255,255,255,.87); white-space: nowrap; }
.powered a { color: #1a73d0; font-weight: 500; }

.chart-card { display: flex; flex-direction: column; }
.ch-head { height: 120px; flex: none; display: flex; justify-content: space-between; padding: 29px 31px 0 22px; }
.ch-title { font-size: 44px; font-weight: 500; line-height: 48px; }
.ch-sub { font-size: 22px; line-height: 32px; margin-top: 6px; color: rgba(255,255,255,.6); }
.ch-full { margin-top: 18px; }
.ch-svg { display: block; width: 1341px; height: 749px; flex: none; }
.ch-svg path, .ch-svg polyline, .ch-svg polygon { vector-effect: non-scaling-stroke; }
.grid { fill: none; stroke: #4b5a6d; stroke-width: 1.500px; }
.axis-y { fill: none; stroke: #c6cede; stroke-width: 1.500px; }
.axis-x { fill: none; stroke: #b5bfd2; stroke-width: 4px; }
.ln { fill: none; stroke-width: 2.500px; stroke-linejoin: round; }
.ln2 { fill: none; stroke-width: 3.500px; stroke-linejoin: round; }
.ln-red { stroke: #e5473d; }
.ln-green { stroke: #4caf50; }
.ln-blue { stroke: #2196f3; }
.th { fill: none; stroke-width: 4.500px; }
.th-red { stroke: #f90808; }
.th-yel { stroke: #f8dc0a; }
.thd { fill: #fff; stroke-width: 5px; }
.thd-red { stroke: #f90808; }
.thd-yel { stroke: #f8dc0a; }
.th-lab text { font: 22px Roboto, sans-serif; fill: #f0f0f0; text-anchor: end; stroke: #0c1626; stroke-width: 4px; paint-order: stroke; }
.yl text { font: 22px Roboto, sans-serif; fill: rgba(255,255,255,.66); text-anchor: end; }
.xl text { font: 19px Roboto, sans-serif; fill: rgba(255,255,255,.66); text-anchor: middle; }
.xl .xl-b { font: 700 22px Roboto, sans-serif; }
.ax-t { font: 700 21px "Liberation Sans", sans-serif; fill: rgba(255,255,255,.6); text-anchor: middle; }
.br-top { fill: #98a5bd; }
.br-grip { fill: none; stroke: #fff; stroke-width: 1.500px; }
.br-body { fill: #294369; stroke: #d8dfec; stroke-width: 2.500px; }
.br-area { fill: #3d5a85; }
.br-line { fill: none; stroke: #6c8bc2; stroke-width: 2px; }
.br-handle { fill: #fff; }

.legend { flex: 1; padding: 0 26px 0 22px; font-size: 22px; }
.lg-row { height: 45.500px; display: flex; align-items: center; justify-content: space-between; }
.lg-row b { font-weight: 500; color: rgba(255,255,255,.87); }
.lg-avg { justify-content: flex-end; color: rgba(255,255,255,.45); }
.lg-name { display: flex; align-items: center; color: rgba(255,255,255,.55); }
.lg-dot { width: 16px; height: 16px; border-radius: 50%; margin-right: 7px; margin-left: 0; }
.red { background: #f44336; }
.green { background: #4caf50; }
.blue { background: #2196f3; }
```
